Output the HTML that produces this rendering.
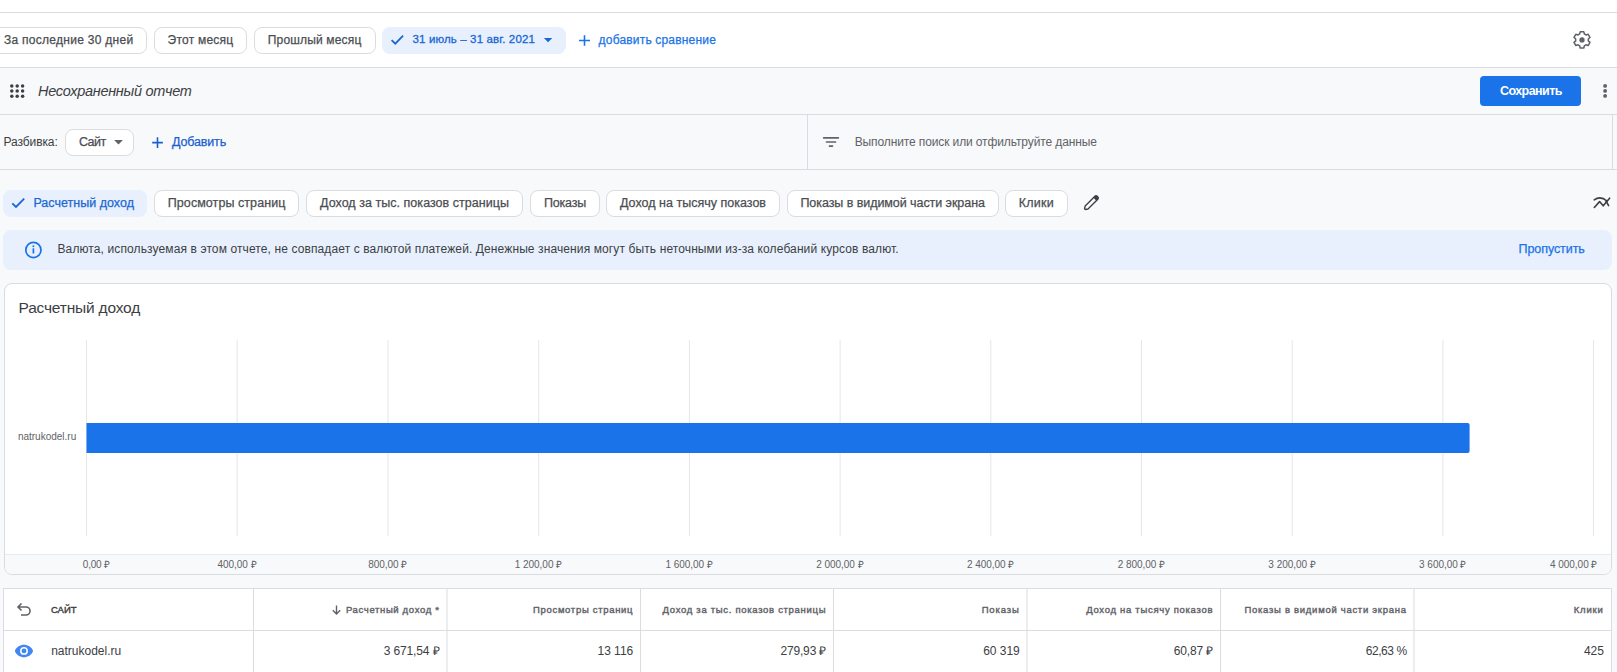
<!DOCTYPE html>
<html><head><meta charset="utf-8"><style>
html,body{margin:0;padding:0;}
body{width:1617px;height:672px;overflow:hidden;position:relative;background:#f8f9fa;font-family:"Liberation Sans", sans-serif;}
.t{position:absolute;white-space:pre;line-height:1;}
.a{position:absolute;box-sizing:border-box;}
svg{position:absolute;overflow:visible;}
</style></head><body>
<!-- top white area -->
<div class=a style="left:0;top:0;width:1617px;height:67px;background:#fff"></div>
<div class=a style="left:0;top:12px;width:1617px;height:1px;background:#dadce0"></div>
<div class=a style="left:0;top:67px;width:1617px;height:1px;background:#dadce0"></div>
<div class=a style="left:0;top:114px;width:1617px;height:1px;background:#dadce0"></div>
<div class=a style="left:0;top:169px;width:1617px;height:1px;background:#dadce0"></div>
<div class=a style="left:807px;top:114px;width:1px;height:56px;background:#dadce0"></div>
<div class=a style="left:1612px;top:114px;width:1px;height:56px;background:#dadce0"></div>
<!-- top chips -->
<div class=a style="left:-20px;top:27px;width:167px;height:27px;border:1px solid #dadce0;border-radius:8px;background:#fff"></div>
<div class=a style="left:154px;top:27px;width:93px;height:27px;border:1px solid #dadce0;border-radius:8px;background:#fff"></div>
<div class=a style="left:254px;top:27px;width:122px;height:27px;border:1px solid #dadce0;border-radius:8px;background:#fff"></div>
<div class=a style="left:382px;top:27px;width:184px;height:27px;border-radius:8px;background:#e8f0fe"></div>

<!-- save button -->
<div class=a style="left:1480px;top:76px;width:101px;height:30px;border-radius:4px;background:#1a73e8"></div>
<!-- breakdown chip -->
<div class=a style="left:65px;top:129px;width:69px;height:27px;border:1px solid #dadce0;border-radius:8px;background:#fff"></div>
<svg style="left:0;top:0" width="1617" height="672">
  <!-- check in date chip -->
  <path d="M391.6 40.1 L395.3 43.7 L403.1 35.7" fill="none" stroke="#1967d2" stroke-width="1.8"/>
  <!-- dropdown in date chip -->
  <path d="M543.9 38 L552.3 38 L548.1 42.3 Z" fill="#1967d2"/>
  <!-- plus add comparison -->
  <path d="M584.5 35.2 V45.8 M579 40.5 H590" stroke="#1a73e8" stroke-width="1.6"/>
  <!-- gear -->
  <g transform="translate(1582,39.9) scale(0.95)">
    <path d="M-1.9 -8.5 H1.9 L2.5 -6.2 A6.6 6.6 0 0 1 4.2 -5.2 L6.5 -5.9 L8.4 -2.6 L6.6 -1 A6.6 6.6 0 0 1 6.6 1 L8.4 2.6 L6.5 5.9 L4.2 5.2 A6.6 6.6 0 0 1 2.5 6.2 L1.9 8.5 H-1.9 L-2.5 6.2 A6.6 6.6 0 0 1 -4.2 5.2 L-6.5 5.9 L-8.4 2.6 L-6.6 1 A6.6 6.6 0 0 1 -6.6 -1 L-8.4 -2.6 L-6.5 -5.9 L-4.2 -5.2 A6.6 6.6 0 0 1 -2.5 -6.2 Z" fill="none" stroke="#5f6368" stroke-width="1.6" stroke-linejoin="round"/>
    <circle cx="0" cy="0" r="2.8" fill="#5f6368"/>
  </g>
  <!-- grid apps icon -->
  <g fill="#3c4043">
    <circle cx="11.8" cy="85.9" r="1.75"/><circle cx="17.2" cy="85.9" r="1.75"/><circle cx="22.6" cy="85.9" r="1.75"/>
    <circle cx="11.8" cy="91.1" r="1.75"/><circle cx="17.2" cy="91.1" r="1.75"/><circle cx="22.6" cy="91.1" r="1.75"/>
    <circle cx="11.8" cy="96.3" r="1.75"/><circle cx="17.2" cy="96.3" r="1.75"/><circle cx="22.6" cy="96.3" r="1.75"/>
  </g>
  <!-- kebab -->
  <g fill="#5f6368">
    <circle cx="1605.1" cy="85.9" r="1.95"/><circle cx="1605.1" cy="90.9" r="1.95"/><circle cx="1605.1" cy="95.9" r="1.95"/>
  </g>
  <!-- breakdown dropdown -->
  <path d="M114.1 140 L122.9 140 L118.5 144.5 Z" fill="#5f6368"/>
  <!-- plus add -->
  <path d="M157.5 137.3 V147.9 M152.2 142.6 H162.9" stroke="#1a5fd0" stroke-width="1.6"/>
  <!-- filter -->
  <g stroke="#5f6368" stroke-width="1.6" stroke-linecap="round">
    <path d="M823.6 137.9 H838.4"/><path d="M826.4 142 H835.6"/><path d="M829.4 146.1 H832.6"/>
  </g>
</svg>
<!-- metric chips -->
<div class=a style="left:3px;top:190px;width:144px;height:27px;border-radius:8px;background:#e8f0fe"></div>
<div class=a style="left:154px;top:190px;width:145px;height:27px;border:1px solid #dadce0;border-radius:8px;background:#fff"></div>
<div class=a style="left:306px;top:190px;width:217px;height:27px;border:1px solid #dadce0;border-radius:8px;background:#fff"></div>
<div class=a style="left:530px;top:190px;width:70px;height:27px;border:1px solid #dadce0;border-radius:8px;background:#fff"></div>
<div class=a style="left:606px;top:190px;width:174px;height:27px;border:1px solid #dadce0;border-radius:8px;background:#fff"></div>
<div class=a style="left:787px;top:190px;width:212px;height:27px;border:1px solid #dadce0;border-radius:8px;background:#fff"></div>
<div class=a style="left:1005px;top:190px;width:63px;height:27px;border:1px solid #dadce0;border-radius:8px;background:#fff"></div>
<!-- banner -->
<div class=a style="left:3px;top:230px;width:1609px;height:40px;border-radius:8px;background:#e8f0fe"></div>
<!-- chart card -->
<div class=a style="left:4px;top:283px;width:1608px;height:292px;border:1px solid #dadce0;border-radius:8px;background:#fff;overflow:hidden">
  <div class=a style="left:0;top:269.5px;width:1606px;height:22px;background:#f8f9fa;border-top:1px solid #e8eaed"></div>
</div>
<!-- table -->
<div class=a style="left:3px;top:588px;width:1609px;height:90px;border:1px solid #dadce0;background:#fff"></div>
<div class=a style="left:4px;top:630px;width:1607px;height:1px;background:#dadce0"></div>
<svg style="left:0;top:0" width="1617" height="672">
  <!-- metric chip check -->
  <path d="M12.3 203.3 L16 207 L24.2 198.6" fill="none" stroke="#1967d2" stroke-width="1.8"/>
  <!-- pencil -->
  <g transform="translate(1091.0,203.1) rotate(45) scale(0.92)">
    <path d="M-2.2 -8.6 Q-2.2 -10 0 -10 Q2.2 -10 2.2 -8.6 L2.2 6.8 L0.6 9.3 H-0.6 L-2.2 6.8 Z" fill="none" stroke="#3c4043" stroke-width="1.5" stroke-linejoin="round"/>
    <path d="M-2.2 -8.6 Q-2.2 -10 0 -10 Q2.2 -10 2.2 -8.6 V-6 H-2.2 Z" fill="#3c4043"/>
  </g>
  <!-- trend icon -->
  <g fill="none" stroke="#3c4043" stroke-width="1.6" stroke-linecap="round" stroke-linejoin="round">
    <path d="M1594.2 199.8 Q1600.5 195.5 1607 201"/>
    <path d="M1594.3 207.5 L1599.6 201.6 L1603.2 205.8 L1609.6 198.2"/>
    <path d="M1606 201 L1608.6 205.6"/>
  </g>
  <!-- info icon -->
  <circle cx="33.4" cy="250" r="7.6" fill="none" stroke="#1a73e8" stroke-width="1.7"/>
  <rect x="32.55" y="248.3" width="1.7" height="5.2" fill="#1a73e8"/>
  <rect x="32.55" y="245.4" width="1.7" height="1.7" fill="#1a73e8"/>
  <!-- gridlines -->
  <g stroke="#e6e6e6" stroke-width="1">
    <path d="M86.5 340 V536 M237.2 340 V536 M388 340 V536 M538.7 340 V536 M689.4 340 V536 M840.1 340 V536 M990.8 340 V536 M1141.5 340 V536 M1292.2 340 V536 M1442.9 340 V536 M1593.5 340 V536"/>
  </g>
  <!-- bar -->
  <path d="M86.5 423 H1467.6 A2 2 0 0 1 1469.6 425 V451 A2 2 0 0 1 1467.6 453 H86.5 Z" fill="#1a73e8"/>
  <!-- table column separators -->
  <g stroke="#dadce0" stroke-width="1">
    <path d="M253.5 589 V672 M447 589 V672 M640.5 589 V672 M833.5 589 V672 M1027 589 V672 M1220.5 589 V672 M1414 589 V672"/>
  </g>
  <!-- undo icon -->
  <path d="M21.5 603.5 L18 607 L21.5 610.5 M18.2 607 H26 A4 4 0 0 1 26 615 H21" fill="none" stroke="#5f6368" stroke-width="1.6"/>
  <!-- sort arrow -->
  <path d="M336.5 605.5 V614 M332.8 610.3 L336.5 614 L340.2 610.3" fill="none" stroke="#5f6368" stroke-width="1.4"/>
  <!-- eye -->
  <path d="M14.8 650.9 C18 642.6 30 642.6 33.1 650.9 C30 659.2 18 659.2 14.8 650.9 Z" fill="#4285f4"/>
  <circle cx="24" cy="650.9" r="3.2" fill="none" stroke="#fff" stroke-width="1.5"/>
</svg>

<div class=t style='left:4.00px;top:34.00px;font-size:12px;color:#4a4d51;letter-spacing:0.276px;-webkit-text-stroke:0.25px #4a4d51;'>За последние 30 дней</div>
<div class=t style='left:167.60px;top:34.00px;font-size:12px;color:#4a4d51;letter-spacing:0.227px;-webkit-text-stroke:0.25px #4a4d51;'>Этот месяц</div>
<div class=t style='left:267.80px;top:34.00px;font-size:12px;color:#4a4d51;letter-spacing:0.164px;-webkit-text-stroke:0.25px #4a4d51;'>Прошлый месяц</div>
<div class=t style='left:412.50px;top:34.00px;font-size:11.5px;color:#1967d2;letter-spacing:0.135px;-webkit-text-stroke:0.3px #1967d2;'>31 июль – 31 авг. 2021</div>
<div class=t style='left:598.60px;top:34.00px;font-size:12px;color:#1a73e8;letter-spacing:0.181px;-webkit-text-stroke:0.25px #1a73e8;'>добавить сравнение</div>
<div class=t style='left:38.00px;top:84.00px;font-size:14.5px;color:#3c4043;font-style:italic;letter-spacing:-0.292px;'>Несохраненный отчет</div>
<div class=t style='left:1500.00px;top:85.00px;font-size:12.5px;color:#ffffff;font-weight:700;letter-spacing:-0.571px;'>Сохранить</div>
<div class=t style='left:3.50px;top:136.00px;font-size:12px;color:#3c4043;letter-spacing:-0.087px;'>Разбивка:</div>
<div class=t style='left:78.90px;top:136.00px;font-size:12.5px;color:#4a4d51;letter-spacing:-0.457px;-webkit-text-stroke:0.25px #4a4d51;'>Сайт</div>
<div class=t style='left:172.00px;top:136.00px;font-size:12.5px;color:#1a5fd0;letter-spacing:-0.156px;-webkit-text-stroke:0.25px #1a5fd0;'>Добавить</div>
<div class=t style='left:854.70px;top:136.00px;font-size:12px;color:#5f6368;letter-spacing:-0.115px;'>Выполните поиск или отфильтруйте данные</div>
<div class=t style='left:33.40px;top:197.00px;font-size:12.5px;color:#1967d2;letter-spacing:0.020px;-webkit-text-stroke:0.25px #1967d2;'>Расчетный доход</div>
<div class=t style='left:167.80px;top:197.00px;font-size:12.5px;color:#4a4d51;letter-spacing:0.067px;-webkit-text-stroke:0.25px #4a4d51;'>Просмотры страниц</div>
<div class=t style='left:320.00px;top:197.00px;font-size:12.5px;color:#4a4d51;letter-spacing:0.037px;-webkit-text-stroke:0.25px #4a4d51;'>Доход за тыс. показов страницы</div>
<div class=t style='left:543.90px;top:197.00px;font-size:12.5px;color:#4a4d51;letter-spacing:-0.153px;-webkit-text-stroke:0.25px #4a4d51;'>Показы</div>
<div class=t style='left:620.00px;top:197.00px;font-size:12.5px;color:#4a4d51;letter-spacing:0.012px;-webkit-text-stroke:0.25px #4a4d51;'>Доход на тысячу показов</div>
<div class=t style='left:800.40px;top:197.00px;font-size:12.5px;color:#4a4d51;letter-spacing:-0.059px;-webkit-text-stroke:0.25px #4a4d51;'>Показы в видимой части экрана</div>
<div class=t style='left:1018.80px;top:197.00px;font-size:12.5px;color:#4a4d51;letter-spacing:0.217px;-webkit-text-stroke:0.25px #4a4d51;'>Клики</div>
<div class=t style='left:57.50px;top:243.00px;font-size:12px;color:#3c4043;letter-spacing:0.111px;'>Валюта, используемая в этом отчете, не совпадает с валютой платежей. Денежные значения могут быть неточными из-за колебаний курсов валют.</div>
<div class=t style='left:1518.50px;top:243.00px;font-size:12.5px;color:#1a73e8;letter-spacing:-0.067px;-webkit-text-stroke:0.25px #1a73e8;'>Пропустить</div>
<div class=t style='left:18.50px;top:300.00px;font-size:15.5px;color:#3c4043;letter-spacing:-0.191px;'>Расчетный доход</div>
<div class=t style='left:17.90px;top:432.00px;font-size:10px;color:#5f6368;letter-spacing:-0.006px;'>natrukodel.ru</div>
<div class=t style='left:82.80px;top:560.00px;font-size:10px;color:#5f6368;letter-spacing:-0.192px;'>0,00 ₽</div>
<div class=t style='left:217.57px;top:560.00px;font-size:10px;color:#5f6368;letter-spacing:-0.059px;'>400,00 ₽</div>
<div class=t style='left:368.29px;top:560.00px;font-size:10px;color:#5f6368;letter-spacing:-0.059px;'>800,00 ₽</div>
<div class=t style='left:514.76px;top:560.00px;font-size:10px;color:#5f6368;letter-spacing:-0.032px;'>1 200,00 ₽</div>
<div class=t style='left:665.48px;top:560.00px;font-size:10px;color:#5f6368;letter-spacing:-0.032px;'>1 600,00 ₽</div>
<div class=t style='left:816.20px;top:560.00px;font-size:10px;color:#5f6368;letter-spacing:-0.032px;'>2 000,00 ₽</div>
<div class=t style='left:966.92px;top:560.00px;font-size:10px;color:#5f6368;letter-spacing:-0.032px;'>2 400,00 ₽</div>
<div class=t style='left:1117.64px;top:560.00px;font-size:10px;color:#5f6368;letter-spacing:-0.032px;'>2 800,00 ₽</div>
<div class=t style='left:1268.36px;top:560.00px;font-size:10px;color:#5f6368;letter-spacing:-0.032px;'>3 200,00 ₽</div>
<div class=t style='left:1419.08px;top:560.00px;font-size:10px;color:#5f6368;letter-spacing:-0.032px;'>3 600,00 ₽</div>
<div class=t style='left:1550.00px;top:560.00px;font-size:10px;color:#5f6368;letter-spacing:-0.032px;'>4 000,00 ₽</div>
<div class=t style='left:51.00px;top:605.00px;font-size:9.5px;color:#3c4043;letter-spacing:-0.031px;-webkit-text-stroke:0.4px #3c4043;'>САЙТ</div>
<div class=t style='left:345.90px;top:605.00px;font-size:9.5px;color:#5f6368;letter-spacing:0.649px;-webkit-text-stroke:0.4px #5f6368;'>Расчетный доход *</div>
<div class=t style='left:533.00px;top:605.00px;font-size:9.5px;color:#5f6368;letter-spacing:0.687px;-webkit-text-stroke:0.4px #5f6368;'>Просмотры страниц</div>
<div class=t style='left:662.60px;top:605.00px;font-size:9.5px;color:#5f6368;letter-spacing:0.693px;-webkit-text-stroke:0.4px #5f6368;'>Доход за тыс. показов страницы</div>
<div class=t style='left:981.70px;top:605.00px;font-size:9.5px;color:#5f6368;letter-spacing:0.859px;-webkit-text-stroke:0.4px #5f6368;'>Показы</div>
<div class=t style='left:1086.20px;top:605.00px;font-size:9.5px;color:#5f6368;letter-spacing:0.707px;-webkit-text-stroke:0.4px #5f6368;'>Доход на тысячу показов</div>
<div class=t style='left:1244.50px;top:605.00px;font-size:9.5px;color:#5f6368;letter-spacing:0.713px;-webkit-text-stroke:0.4px #5f6368;'>Показы в видимой части экрана</div>
<div class=t style='left:1573.70px;top:605.00px;font-size:9.5px;color:#5f6368;letter-spacing:0.828px;-webkit-text-stroke:0.4px #5f6368;'>Клики</div>
<div class=t style='left:383.70px;top:645.00px;font-size:12px;color:#3c4043;letter-spacing:-0.125px;'>3 671,54 ₽</div>
<div class=t style='left:597.50px;top:645.00px;font-size:12px;color:#3c4043;letter-spacing:-0.019px;'>13 116</div>
<div class=t style='left:780.40px;top:645.00px;font-size:12px;color:#3c4043;letter-spacing:-0.156px;'>279,93 ₽</div>
<div class=t style='left:983.20px;top:645.00px;font-size:12px;color:#3c4043;letter-spacing:-0.034px;'>60 319</div>
<div class=t style='left:1173.70px;top:645.00px;font-size:12px;color:#3c4043;letter-spacing:-0.125px;'>60,87 ₽</div>
<div class=t style='left:1365.70px;top:645.00px;font-size:12px;color:#3c4043;letter-spacing:-0.435px;'>62,63 %</div>
<div class=t style='left:1584.10px;top:645.00px;font-size:12px;color:#3c4043;letter-spacing:-0.144px;'>425</div>
<div class=t style='left:51.20px;top:645.00px;font-size:12px;color:#3c4043;letter-spacing:-0.004px;'>natrukodel.ru</div>
</body></html>
